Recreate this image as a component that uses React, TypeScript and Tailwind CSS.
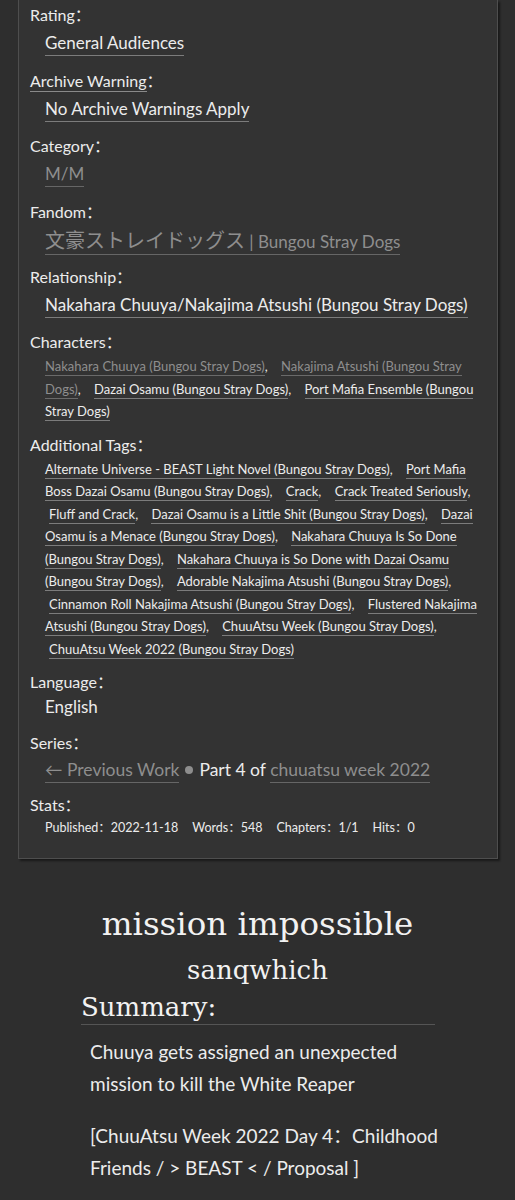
const sans = "font-['Lato','Noto_Sans_CJK_SC',sans-serif]"
const serif = "font-['DejaVu_Serif',serif]"

type Tag = { text: string; dim?: boolean }

const characters: Tag[] = [
  { text: 'Nakahara Chuuya (Bungou Stray Dogs)', dim: true },
  { text: 'Nakajima Atsushi (Bungou Stray Dogs)', dim: true },
  { text: 'Dazai Osamu (Bungou Stray Dogs)' },
  { text: 'Port Mafia Ensemble (Bungou Stray Dogs)' },
]

const freeforms: Tag[] = [
  { text: 'Alternate Universe - BEAST Light Novel (Bungou Stray Dogs)' },
  { text: 'Port Mafia Boss Dazai Osamu (Bungou Stray Dogs)' },
  { text: 'Crack' },
  { text: 'Crack Treated Seriously' },
  { text: 'Fluff and Crack' },
  { text: 'Dazai Osamu is a Little Shit (Bungou Stray Dogs)' },
  { text: 'Dazai Osamu is a Menace (Bungou Stray Dogs)' },
  { text: 'Nakahara Chuuya Is So Done (Bungou Stray Dogs)' },
  { text: 'Nakahara Chuuya is So Done with Dazai Osamu (Bungou Stray Dogs)' },
  { text: 'Adorable Nakajima Atsushi (Bungou Stray Dogs)' },
  { text: 'Cinnamon Roll Nakajima Atsushi (Bungou Stray Dogs)' },
  { text: 'Flustered Nakajima Atsushi (Bungou Stray Dogs)' },
  { text: 'ChuuAtsu Week (Bungou Stray Dogs)' },
  { text: 'ChuuAtsu Week 2022 (Bungou Stray Dogs)' },
]

const Label = ({ children, underline }: { children: React.ReactNode; underline?: boolean }) => (
  <dt className="h-6 text-[16px] leading-6 text-[#ececec]">
    <span className={underline ? 'border-b border-[#8a8a8a] pb-[1px]' : ''}>{children}</span>：
  </dt>
)

const TagList = ({ tags }: { tags: Tag[] }) => (
  <ul className="pl-[15px] text-[13px] leading-[22.5px]">
    {tags.map((tag, i) => (
      <li key={tag.text} className={`inline mr-[6px] ${i > 0 ? 'ml-[4px]' : ''}`}>
        <a
          className={`border-b pb-[1px] ${
            tag.dim ? 'text-[#8e8e8e] border-[#6a6a6a]' : 'text-[#ececec] border-[#7c7c7c]'
          }`}
        >
          {tag.text}
        </a>
        {i < tags.length - 1 && <span className="text-[#ececec]">,</span>}{' '}
      </li>
    ))}
  </ul>
)

const Value = ({ children, dim }: { children: React.ReactNode; dim?: boolean }) => (
  <dd className="pl-[15px] mt-[2px] text-[17px] leading-7">
    <a
      className={`border-b pb-[2px] ${
        dim ? 'text-[#8e8e8e] border-[#666]' : 'text-[#ececec] border-[#7c7c7c]'
      }`}
    >
      {children}
    </a>
  </dd>
)

export default function App() {
  return (
    <div className={`min-h-screen bg-[#2e2e2e] pb-10 ${sans}`}>
      <div className="mx-[18px] w-[480px] border-x border-b border-[#4e4e4e] bg-[#333333] pl-[11px] pr-[17px] pt-[3px] pb-[19px] shadow-[2px_2px_2px_rgba(0,0,0,0.45)]">
        <dl>
          <Label>Rating</Label>
          <Value>General Audiences</Value>

          <div className="mt-[11.5px]">
            <Label underline>Archive Warning</Label>
            <Value>No Archive Warnings Apply</Value>
          </div>

          <div className="mt-[11.5px]">
            <Label>Category</Label>
            <Value dim>M/M</Value>
          </div>

          <div className="mt-[11.5px]">
            <Label>Fandom</Label>
            <Value dim>
              <span className="text-[20px]">文豪ストレイドッグス</span> | Bungou Stray Dogs
            </Value>
          </div>

          <div className="mt-[9px]">
            <Label>Relationship</Label>
            <Value>Nakahara Chuuya/Nakajima Atsushi (Bungou Stray Dogs)</Value>
          </div>

          <div className="mt-[11.5px]">
            <Label>Characters</Label>
            <dd className="mt-[1px]">
              <TagList tags={characters} />
            </dd>
          </div>

          <div className="mt-[10px]">
            <Label>Additional Tags</Label>
            <dd className="mt-[1px]">
              <TagList tags={freeforms} />
            </dd>
          </div>

          <div className="mt-[10px]">
            <Label>Language</Label>
            <dd className="pl-[15px] text-[17px] leading-[26px] text-[#ececec]">English</dd>
          </div>

          <div className="mt-[11px]">
            <Label>Series</Label>
            <dd className="mt-[1px] pl-[15px] text-[17.5px] leading-7 text-[#ececec]">
              <a className="border-b border-[#666] pb-[2px] text-[#8e8e8e]">← Previous Work</a>
              <span className="mx-[6px] inline-block h-2 w-2 rounded-full bg-[#8e8e8e] align-[2px]" />
              Part 4 of{' '}
              <a className="border-b border-[#666] pb-[2px] text-[#8e8e8e]">chuuatsu week 2022</a>
            </dd>
          </div>

          <div className="mt-[9px]">
            <Label>Stats</Label>
            <dd className="pl-[15px] text-[12.5px] leading-[22px] text-[#ececec]">
              <span className="mr-[14px]">Published：2022-11-18</span>
              <span className="mr-[14px]">Words：548</span>
              <span className="mr-[14px]">Chapters：1/1</span>
              <span>Hits：0</span>
            </dd>
          </div>
        </dl>
      </div>

      <div className="mt-[43px] px-[81px]">
        <h2 className={`${serif} text-center text-[32.5px] leading-[44px] text-[#f2f2f2]`}>
          mission impossible
        </h2>
        <h3 className={`${serif} mt-[7px] text-center text-[26px] leading-[34px] text-[#f2f2f2]`}>
          sanqwhich
        </h3>
        <h3 className={`${serif} mt-[4px] w-[354px] border-b border-[#555] text-[26px] leading-[33px] text-[#f2f2f2]`}>
          Summary:
        </h3>
        <blockquote className="w-[365px] pl-[9px] pt-[11px] text-[19px] leading-8 text-[#ececec]">
          <p>Chuuya gets assigned an unexpected mission to kill the White Reaper</p>
          <p className="mt-5">[ChuuAtsu Week 2022 Day 4：Childhood Friends / &gt; BEAST &lt; / Proposal ]</p>
        </blockquote>
      </div>
    </div>
  )
}
